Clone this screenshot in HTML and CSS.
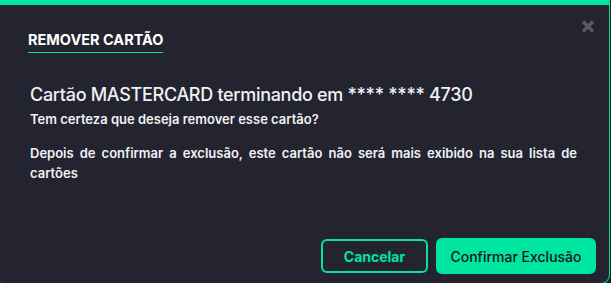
FILE: index.html
```html
<!DOCTYPE html>
<html lang="pt-BR">
<head>
<meta charset="utf-8">
<title>Remover cartão</title>
<link rel="stylesheet" href="styles.css">
</head>
<body>
<div class="modal">
  <div class="modal-header">
    <h2 class="modal-title">REMOVER CARTÃO</h2>
    <button class="close" aria-label="Fechar">
      <svg width="14" height="13" viewBox="0 0 14 13"><path d="M2 1.5 L12 11.5 M12 1.5 L2 11.5" stroke="#5a5a61" stroke-width="3.2" stroke-linecap="butt"/></svg>
    </button>
  </div>
  <div class="modal-body">
    <h3 class="card-line">Cartão MASTERCARD terminando em **** **** 4730</h3>
    <p class="question">Tem certeza que deseja remover esse cartão?</p>
    <p class="desc">Depois de confirmar a exclusão, este cartão não será mais exibido na sua lista de cartões</p>
  </div>
  <div class="modal-footer">
    <button class="btn btn-outline">Cancelar</button>
    <button class="btn btn-primary">Confirmar Exclusão</button>
  </div>
</div>
</body>
</html>
```
FILE: styles.css
```css
html, body {
  margin: 0;
  padding: 0;
  height: 100%;
  overflow: hidden;
  background: #1c1d25;
}
body {
  font-family: Inter, "Noto Sans", sans-serif;
  color: #f1f1f3;
}
.modal {
  position: relative;
  box-sizing: border-box;
  width: 616px;
  height: 284px;
  margin-left: -6px;
  background: #23242f;
  border: 1px solid #00e5a0;
  border-top-width: 5px;
  border-radius: 0 0 9px 9px;
  display: flex;
  flex-direction: column;
}
.modal-header {
  padding: 24px 0 0 33px;
}
.modal-title {
  display: inline-block;
  margin: 0;
  font-size: 14.5px;
  line-height: 17px;
  font-weight: 700;
  letter-spacing: 0;
  padding-bottom: 4px;
  border-bottom: 1px solid #00e5a0;
  color: #ffffff;
}
.close {
  position: absolute;
  top: 15px;
  right: 14px;
  background: none;
  border: 0;
  padding: 0;
  width: 14px;
  height: 13px;
  cursor: pointer;
}
.close svg { display: block; }
.modal-body {
  padding: 0 0 0 35px;
}
.card-line {
  margin: 31px 0 0;
  font-size: 18px;
  line-height: 22px;
  font-weight: 500;
  letter-spacing: -0.3px;
}
.question {
  margin: 5px 0 0;
  font-size: 13px;
  line-height: 16px;
  font-weight: 600;
  letter-spacing: 0;
}
.desc {
  margin: 16px 0 0;
  width: 547px;
  font-size: 13px;
  line-height: 20px;
  font-weight: 600;
  letter-spacing: 0;
  text-align: justify;
}
.modal-footer {
  margin-top: auto;
  display: flex;
  justify-content: flex-end;
  align-items: center;
  gap: 8px;
  padding: 0 13px 9px 0;
}
.btn {
  font-family: Inter, "Noto Sans", sans-serif;
  font-size: 14px;
  border-radius: 6px;
  cursor: pointer;
}
.btn-outline {
  width: 107px;
  height: 34px;
  background: transparent;
  border: 2px solid #00e5a0;
  color: #00e5a0;
  font-weight: 700;
}
.btn-primary {
  width: 160px;
  height: 36px;
  background: #00e5a0;
  border: 0;
  color: #15161c;
  font-weight: 500;
}
```
